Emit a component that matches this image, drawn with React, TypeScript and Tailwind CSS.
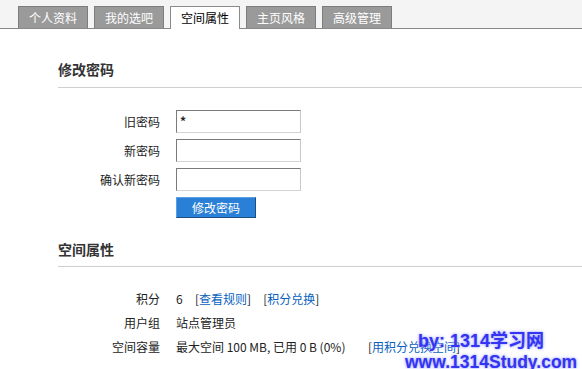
import React from 'react'

const TABS = ['个人资料', '我的选吧', '空间属性', '主页风格', '高级管理']
const ACTIVE = 2

function Field({ label, value }: { label: string; value?: string }) {
  return (
    <div className="flex items-center h-[23px]">
      <span className="w-[160px] text-right">{label}</span>
      <div className="ml-[16px] w-[125px] h-[23px] border border-t-[#7a7a7a] border-l-[#7a7a7a] border-r-[#c8c8c8] border-b-[#d4d4d4] bg-white pl-[3px] leading-[20px] font-bold">
        {value}
      </div>
    </div>
  )
}

function Link({ children }: { children: React.ReactNode }) {
  return (
    <span>
      [<span className="text-[#0a5fbf]">{children}</span>]
    </span>
  )
}

export default function App() {
  return (
    <div
      className="relative w-[582px] h-[369px] overflow-hidden bg-white text-[12px] text-[#222]"
      style={{ fontFamily: '"Noto Sans CJK SC", "Liberation Sans", sans-serif' }}
    >
      {/* Tabs */}
      <div className="h-[29px] bg-[#f4f4f4] border-b border-[#888] flex items-end gap-[6px] pl-[18px]">
        {TABS.map((t, i) =>
          i === ACTIVE ? (
            <div
              key={t}
              className="w-[70px] h-[23px] -mb-px bg-white border border-b-0 border-[#8a8a8a] text-black flex items-center justify-center"
            >
              {t}
            </div>
          ) : (
            <div
              key={t}
              className="w-[70px] h-[22px] bg-[#9a9a9a] border border-b-0 border-[#7d7d7d] text-white flex items-center justify-center"
            >
              {t}
            </div>
          )
        )}
      </div>

      {/* 修改密码 */}
      <div className="ml-[58px] pt-[30px] pb-[8px] border-b border-[#cfcfcf]">
        <h2 className="text-[14px] font-bold leading-[20px] text-[#333]">修改密码</h2>
      </div>
      <div className="pt-[22px] flex flex-col gap-[6px]">
        <Field label="旧密码" value="*" />
        <Field label="新密码" />
        <Field label="确认新密码" />
        <div className="pl-[176px]">
          <button className="w-[80px] h-[21px] bg-[#2a80d6] border border-t-[#5d9fe3] border-l-[#5d9fe3] border-r-[#1c4f86] border-b-[#1c4f86] text-white text-[12px] leading-[19px]">
            修改密码
          </button>
        </div>
      </div>

      {/* 空间属性 */}
      <div className="ml-[58px] pt-[21px] pb-[7px] border-b border-[#cfcfcf]">
        <h2 className="text-[14px] font-bold leading-[20px] text-[#333]">空间属性</h2>
      </div>
      <div className="pt-[20px] leading-[24px]">
        <div className="flex">
          <span className="w-[160px] text-right">积分</span>
          <span className="ml-[16px] flex gap-[12px]">
            <span className="w-[7px]">6</span>
            <Link>查看规则</Link>
            <Link>积分兑换</Link>
          </span>
        </div>
        <div className="flex">
          <span className="w-[160px] text-right">用户组</span>
          <span className="ml-[16px]">站点管理员</span>
        </div>
        <div className="flex">
          <span className="w-[160px] text-right">空间容量</span>
          <span className="ml-[16px] w-[192px] shrink-0">最大空间 100 MB, 已用 0 B (0%)</span>
          <span className="whitespace-nowrap">
            <Link>用积分兑换空间</Link>
          </span>
        </div>
      </div>

      {/* Watermark */}
      <div
        className="absolute left-[418px] top-[332px] text-[18px] leading-[18px] font-bold text-[#3434f2] whitespace-nowrap [text-shadow:0_0_2px_#9aa0ff,0_0_4px_#c4c8ff]"
        style={{ fontFamily: '"Liberation Sans", "Noto Sans CJK SC", sans-serif' }}
      >
        by: 1314学习网
      </div>
      <div
        className="absolute left-[405px] top-[353px] text-[17.5px] leading-[18px] font-bold text-[#3434f2] whitespace-nowrap [text-shadow:0_0_2px_#9aa0ff,0_0_4px_#c4c8ff]"
        style={{ fontFamily: '"Liberation Sans", sans-serif' }}
      >
        www.1314Study.com
      </div>
    </div>
  )
}
